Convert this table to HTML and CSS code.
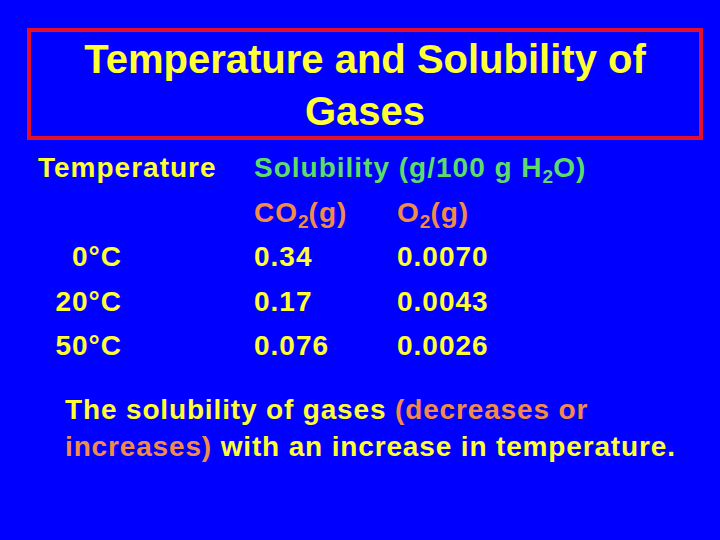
FILE: index.html
```html
<!DOCTYPE html>
<html lang="en">
<head>
    <meta charset="UTF-8">
    <meta name="viewport" content="width=device-width, initial-scale=1.0">
    <title>Temperature and Solubility of Gases</title>
    <link rel="stylesheet" href="styles.css">
</head>
<body>
    <div class="slide">
        <header class="title-box">
            <h1>Temperature and Solubility of Gases</h1>
        </header>

        <div class="table">
            <div class="head">Temperature</div>
            <div class="head green span">Solubility (g/100 g H<sub>2</sub>O)</div>

            <div></div>
            <div class="orange">CO<sub>2</sub>(g)</div>
            <div class="orange">O<sub>2</sub>(g)</div>

            <div class="temp">0°C</div>
            <div>0.34</div>
            <div>0.0070</div>

            <div class="temp">20°C</div>
            <div>0.17</div>
            <div>0.0043</div>

            <div class="temp">50°C</div>
            <div>0.076</div>
            <div>0.0026</div>
        </div>

        <p class="question">
            The solubility of gases <span class="orange">(decreases or</span><br>
            <span class="orange">increases)</span> with an increase in temperature.
        </p>
    </div>
</body>
</html>
```

FILE: styles.css
```css
body {
    margin: 0;
    background: #0000ff;
    font-family: 'Liberation Sans', Arial, sans-serif;
    font-weight: bold;
    color: #ffff33;
}

.slide {
    width: 720px;
    height: 540px;
    padding-top: 28px;
    box-sizing: border-box;
}

.title-box {
    margin-left: 27px;
    width: 676px;
    height: 112px;
    box-sizing: border-box;
    border: 4px solid #e2102c;
    padding-top: 1px;
}

.title-box h1 {
    margin: 0;
    font-size: 40px;
    line-height: 52px;
    text-align: center;
    padding: 0 40px;
}

.table {
    display: grid;
    grid-template-columns: 216px 143px 1fr;
    margin: 6px 0 0 38px;
    font-size: 28px;
    line-height: 44.5px;
    letter-spacing: 1px;
    white-space: nowrap;
}

.table .span {
    grid-column: span 2;
}

.table .temp {
    text-align: right;
    padding-right: 132px;
}

.green {
    color: #5ddc6a;
}

.orange {
    color: #f08c48;
}

sub {
    font-size: 0.68em;
    line-height: 0;
    vertical-align: -0.3em;
    letter-spacing: 0;
}

.question {
    margin: 22px 20px 0 65px;
    font-size: 28px;
    line-height: 37px;
    letter-spacing: 0.85px;
    white-space: nowrap;
}
```
